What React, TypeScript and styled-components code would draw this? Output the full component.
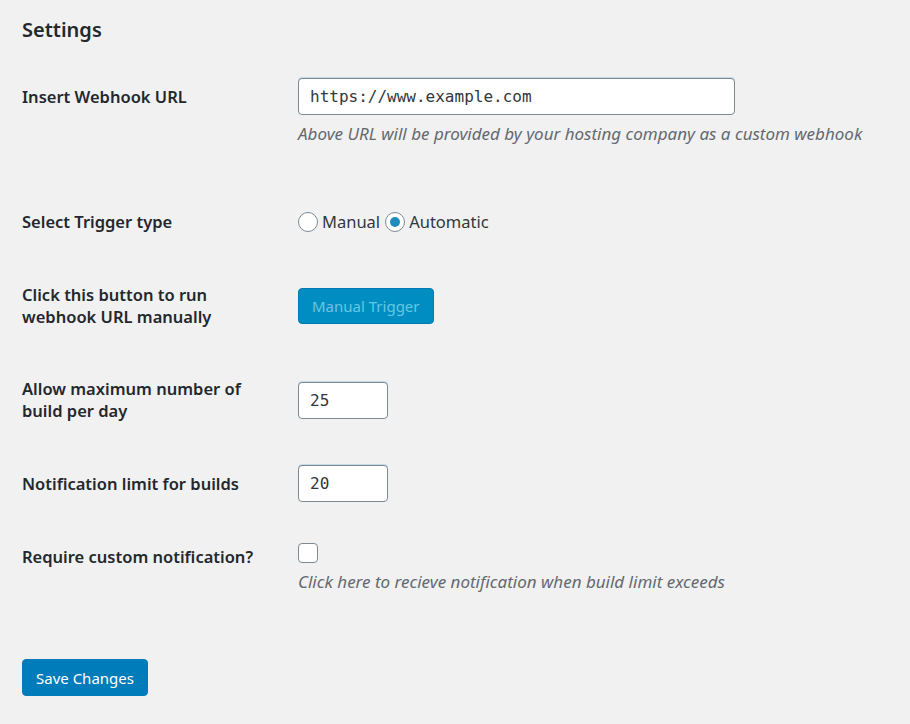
import React from "react";
import styled, { createGlobalStyle } from "styled-components";

const Global = createGlobalStyle`
  html, body { margin: 0; padding: 0; background: #f1f1f1; }
  body {
    font-family: "Noto Sans", "Open Sans", Arial, sans-serif;
    font-size: 16.5px;
    color: #23282d;
  }
  * { box-sizing: border-box; }
`;

const Page = styled.div`
  padding: 0 22px 28px 22px;
  width: 910px;
  min-height: 724px;
  background: #f1f1f1;
  overflow: hidden;
`;

const Heading = styled.h2`
  margin: 15px 0 0 0;
  font-size: 20px;
  line-height: 30px;
  font-weight: 600;
  color: #23282d;
`;

const Form = styled.div`
  display: flex;
  flex-direction: column;
`;

const Row = styled.div<{ $top: number }>`
  display: grid;
  grid-template-columns: 276px 1fr;
  grid-template-rows: auto auto;
  margin-top: ${(p) => p.$top}px;
`;

const Label = styled.div`
  grid-column: 1;
  grid-row: 1;
  align-self: center;
  font-weight: 600;
  line-height: 22px;
  width: 250px;
`;

const Control = styled.div`
  grid-column: 2;
  grid-row: 1;
  display: flex;
  align-items: center;
`;

const Desc = styled.p<{ $gap: number }>`
  grid-column: 2;
  grid-row: 2;
  margin: ${(p) => p.$gap}px 0 0 0;
  font-style: italic;
  font-size: 17px;
  color: #646970;
  line-height: 22px;
`;

const TextInput = styled.input<{ $w: number }>`
  width: ${(p) => p.$w}px;
  height: 37px;
  padding: 0 11px;
  border: 1px solid #7e8993;
  border-radius: 4px;
  background: #fff;
  font-family: "DejaVu Sans Mono", "Liberation Mono", monospace;
  font-size: 16px;
  color: #32373c;
  outline: none;
  box-shadow: 0 -1px 0 #c5dbe8;
`;

const RadioGroup = styled.div`
  display: flex;
  align-items: center;
  line-height: 22px;
`;

const RadioLabel = styled.label`
  display: inline-flex;
  align-items: center;
  margin-right: 5px;
  color: #32373c;
`;

const RadioCircle = styled.span<{ $checked?: boolean }>`
  width: 20px;
  height: 20px;
  border: 1px solid #7e8993;
  border-radius: 50%;
  background: #fff;
  margin-right: 4px;
  display: inline-flex;
  align-items: center;
  justify-content: center;
  &::after {
    content: "";
    display: ${(p) => (p.$checked ? "block" : "none")};
    width: 10px;
    height: 10px;
    border-radius: 50%;
    background: #1e8cbe;
  }
`;

const Button = styled.button<{ $disabled?: boolean }>`
  height: ${(p) => (p.$disabled ? 36 : 37)}px;
  padding: 0 13px;
  border-radius: 4px;
  border: 1px solid ${(p) => (p.$disabled ? "#007cb2" : "#007cba")};
  background: ${(p) => (p.$disabled ? "#008ec2" : "#007cba")};
  color: ${(p) => (p.$disabled ? "#66c6e4" : "#fff")};
  font-family: "Noto Sans", "Open Sans", Arial, sans-serif;
  font-size: 15px;
  cursor: pointer;
`;

const Checkbox = styled.span`
  width: 20px;
  height: 20px;
  border: 1px solid #7e8993;
  border-radius: 4px;
  background: #fff;
  margin-bottom: 8px;
`;

const CheckLine = styled.div`
  grid-column: 2;
  grid-row: 1;
  display: flex;
  align-items: flex-start;
  height: 28px;
`;

const SaveWrap = styled.div`
  margin-top: 66px;
`;

export default function App() {
  return (
    <Page>
      <Global />
      <Heading>Settings</Heading>
      <Form>
        <Row $top={33}>
          <Label>Insert Webhook URL</Label>
          <Control>
            <TextInput $w={437} defaultValue="https://www.example.com" />
          </Control>
          <Desc $gap={8}>Above URL will be provided by your hosting company as a custom webhook</Desc>
        </Row>
        <Row $top={66}>
          <Label>Select Trigger type</Label>
          <Control>
            <RadioGroup>
              <RadioLabel>
                <RadioCircle />
                Manual
              </RadioLabel>
              <RadioLabel>
                <RadioCircle $checked />
                Automatic
              </RadioLabel>
            </RadioGroup>
          </Control>
        </Row>
        <Row $top={51}>
          <Label>Click this button to run webhook URL manually</Label>
          <Control>
            <Button $disabled>Manual Trigger</Button>
          </Control>
        </Row>
        <Row $top={50}>
          <Label>Allow maximum number of build per day</Label>
          <Control>
            <TextInput $w={90} defaultValue="25" />
          </Control>
        </Row>
        <Row $top={43}>
          <Label>Notification limit for builds</Label>
          <Control>
            <TextInput $w={90} defaultValue="20" />
          </Control>
        </Row>
        <Row $top={41}>
          <Label>Require custom notification?</Label>
          <CheckLine>
            <Checkbox />
          </CheckLine>
          <Desc $gap={0}>Click here to recieve notification when build limit exceeds</Desc>
        </Row>
      </Form>
      <SaveWrap>
        <Button>Save Changes</Button>
      </SaveWrap>
    </Page>
  );
}
